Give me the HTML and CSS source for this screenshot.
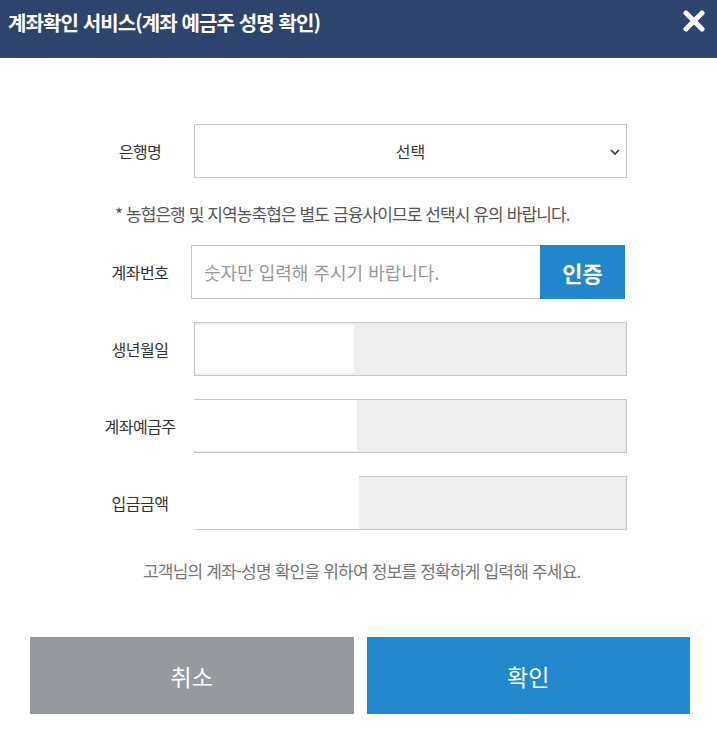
FILE: index.html
```html
<!DOCTYPE html>
<html lang="ko">
  <head>
    <meta charset="UTF-8" />
    <meta name="viewport" content="width=device-width, initial-scale=1.0" />
    <title>계좌확인 서비스</title>
    <link rel="stylesheet" href="styles.css">
  </head>
  <body>
    <!-- 헤더 -->
    <div class="header">
      <h1>계좌확인 서비스(계좌 예금주 성명 확인)</h1>
      <button class="close-button" type="button">
        <svg width="22" height="22" viewBox="0 0 22 22">
          <path d="M3 3 L19 19 M19 3 L3 19" stroke="#fff" stroke-width="5" stroke-linecap="round" />
        </svg>
      </button>
    </div>

    <!-- 입력 폼 -->
    <div class="form">
      <div class="row">
        <label class="label">은행명</label>
        <div class="select-box">
          <span>선택</span>
          <svg class="chevron" width="10" height="6" viewBox="0 0 10 6">
            <polyline points="1,1 5,5 9,1" fill="none" stroke="#333" stroke-width="1.6" />
          </svg>
        </div>
      </div>

      <p class="note">* 농협은행 및 지역농축협은 별도 금융사이므로 선택시 유의 바랍니다.</p>

      <div class="row">
        <label class="label">계좌번호</label>
        <div class="account">
          <input type="text" placeholder="숫자만 입력해 주시기 바랍니다." />
          <button class="auth-button" type="button">인증</button>
        </div>
      </div>

      <div class="row">
        <label class="label">생년월일</label>
        <div class="readonly-box">
          <div class="inner inner-birth"></div>
        </div>
      </div>

      <div class="row">
        <label class="label">계좌예금주</label>
        <div class="readonly-box">
          <div class="inner inner-owner"></div>
        </div>
      </div>

      <div class="row">
        <label class="label">입금금액</label>
        <div class="readonly-box">
          <div class="inner inner-amount"></div>
        </div>
      </div>

      <p class="guide">고객님의 계좌-성명 확인을 위하여 정보를 정확하게 입력해 주세요.</p>
    </div>

    <!-- 버튼 -->
    <div class="actions">
      <button class="btn btn-cancel" type="button">취소</button>
      <button class="btn btn-ok" type="button">확인</button>
    </div>
  </body>
</html>
```

FILE: styles.css
```css
/* 전체 */
body {
  margin: 0;
  width: 717px;
  background-color: #fff;
  font-family: "Noto Sans CJK KR", "Noto Sans", sans-serif;
  color: #333;
}

/* 헤더 */
.header {
  height: 58px;
  background-color: #2e436d;
  display: flex;
  align-items: center;
  justify-content: space-between;
  padding: 0 12px 0 8px;
}

.header h1 {
  margin: 0 0 13px;
  font-size: 20px;
  font-weight: bold;
  color: #fff;
  letter-spacing: -0.9px;
}

.close-button {
  background: transparent;
  border: none;
  padding: 0;
  margin-bottom: 14px;
  cursor: pointer;
}

/* 폼 */
.form {
  padding: 66px 90px 0 95px;
}

.row {
  display: flex;
  align-items: center;
  height: 54px;
  margin-bottom: 23px;
}

.label {
  width: 90px;
  flex: none;
  text-align: center;
  font-size: 16px;
  color: #333;
  letter-spacing: -0.5px;
}

.select-box {
  margin-left: 9px;
  flex: 1;
  height: 52px;
  border: 1px solid #c8c8c8;
  display: flex;
  align-items: center;
  justify-content: center;
  position: relative;
  font-size: 16px;
}

.chevron {
  position: absolute;
  right: 6px;
  top: 24px;
}

.note {
  margin: 2px 0 19px 0;
  padding-left: 20px;
  font-size: 17px;
  color: #555;
  letter-spacing: -0.9px;
}

/* 계좌번호 */
.account {
  margin-left: 6px;
  flex: 1;
  display: flex;
  height: 54px;
  margin-right: 2px;
}

.account input {
  flex: 1;
  min-width: 0;
  border: 1px solid #c8c8c8;
  border-right: none;
  padding: 0 12px;
  font-family: "Noto Sans CJK KR", "Noto Sans", sans-serif;
  font-size: 18px;
  outline: none;
}

.account input::placeholder {
  color: #999;
}

.auth-button {
  width: 85px;
  border: none;
  background-color: #2287cb;
  color: #fff;
  font-family: "Noto Sans CJK KR", "Noto Sans", sans-serif;
  font-size: 22px;
  font-weight: bold;
}

/* 읽기 전용 */
.readonly-box {
  margin-left: 9px;
  flex: 1;
  height: 52px;
  border: 1px solid #c8c8c8;
  background-color: #eee;
  position: relative;
}

.inner {
  position: absolute;
  background-color: #fff;
}

.inner-birth {
  left: 0;
  top: 2px;
  width: 159px;
  height: 48px;
}

.inner-owner {
  left: -1px;
  top: 0;
  width: 163px;
  height: 51px;
}

.inner-amount {
  left: -1px;
  top: -1px;
  width: 165px;
  height: 53px;
}

.guide {
  margin: 28px 0 0 0;
  padding-left: 48px;
  font-size: 17px;
  color: #777;
  letter-spacing: -0.8px;
}

/* 하단 버튼 */
.actions {
  display: flex;
  gap: 13px;
  padding: 54px 27px 0 30px;
}

.btn {
  flex: 1;
  height: 77px;
  border: none;
  color: #fff;
  font-family: "Noto Sans CJK KR", "Noto Sans", sans-serif;
  font-size: 23px;
}

.btn-cancel {
  background-color: #969a9e;
}

.btn-ok {
  background-color: #2289cc;
}
```
